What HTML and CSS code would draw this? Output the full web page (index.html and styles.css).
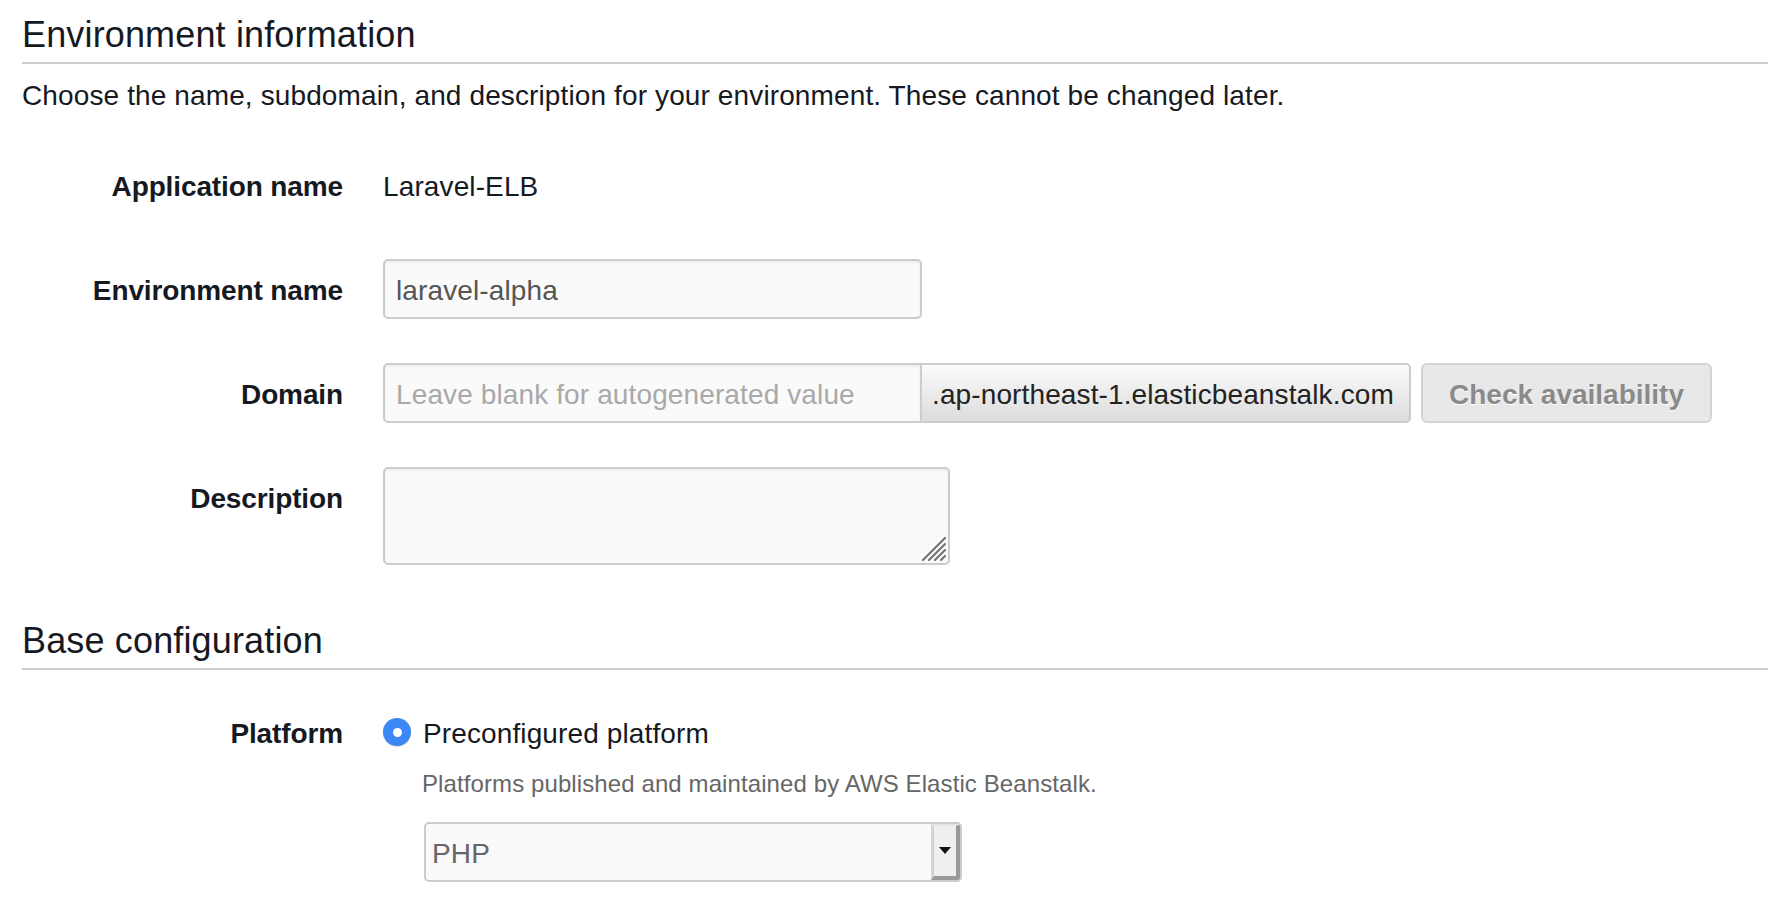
FILE: index.html
```html
<!DOCTYPE html>
<html lang="en">
<head>
<meta charset="utf-8">
<title>Environment information</title>
<link rel="stylesheet" href="styles.css">
</head>
<body>
<div class="page">
  <section class="section">
    <h2 class="section-title">Environment information</h2>
    <p class="section-desc">Choose the name, subdomain, and description for your environment. These cannot be changed later.</p>
    <div class="form">
      <div class="label">Application name</div>
      <div class="value"><span class="static">Laravel-ELB</span></div>

      <div class="label">Environment name</div>
      <div class="value"><input class="text-input env-input" type="text" value="laravel-alpha"></div>

      <div class="label">Domain</div>
      <div class="value domain">
        <div class="input-group">
          <input class="text-input domain-input" type="text" placeholder="Leave blank for autogenerated value">
          <span class="addon">.ap-northeast-1.elasticbeanstalk.com</span>
        </div>
        <button class="btn" type="button" disabled>Check availability</button>
      </div>

      <div class="label">Description</div>
      <div class="value">
        <div class="textarea-wrap">
          <textarea class="textarea"></textarea>
          <svg class="grip" width="24" height="24" viewBox="0 0 24 24" aria-hidden="true">
            <line x1="1" y1="23" x2="23" y2="1" />
            <line x1="7" y1="23" x2="23" y2="7" />
            <line x1="13" y1="23" x2="23" y2="13" />
            <line x1="19" y1="23" x2="23" y2="19" />
          </svg>
        </div>
      </div>
    </div>
  </section>

  <section class="section base">
    <h2 class="section-title">Base configuration</h2>
    <div class="form form-base">
      <div class="label">Platform</div>
      <div class="value">
        <label class="radio-line"><span class="radio"></span><span class="radio-text">Preconfigured platform</span></label>
        <p class="help">Platforms published and maintained by AWS Elastic Beanstalk.</p>
        <div class="select">
          <span class="select-text">PHP</span>
          <span class="select-btn">
            <svg width="12" height="8" viewBox="0 0 12 8" aria-hidden="true"><path d="M0 0H12L6 7Z" fill="#111"/></svg>
          </span>
        </div>
      </div>
    </div>
  </section>
</div>
</body>
</html>
```

FILE: styles.css
```css
* { box-sizing: border-box; }

html, body {
  margin: 0;
  background: #ffffff;
}

body {
  font-family: "Liberation Sans", Arial, Helvetica, sans-serif;
  font-size: 28px;
  color: #16191f;
  letter-spacing: 0.12px;
}

.page {
  padding: 13px 0 0 22px;
}

.section-title {
  margin: 0;
  font-size: 36px;
  font-weight: 400;
  line-height: 40px;
  padding-top: 2px;
  padding-bottom: 7px;
  border-bottom: 2px solid #cdcdcd;
  color: #16191f;
  letter-spacing: 0.15px;
}

.section-desc {
  margin: 16px 0 0;
  line-height: 32px;
}

.form {
  display: grid;
  grid-template-columns: 321px 1fr;
  column-gap: 40px;
  row-gap: 44px;
  margin-top: 43px;
}

.label {
  height: 60px;
  font-weight: 700;
  text-align: right;
  line-height: 64px;
  white-space: nowrap;
  letter-spacing: -0.12px;
}

.static {
  display: block;
  height: 60px;
  line-height: 64px;
}

.text-input {
  display: block;
  height: 60px;
  border: 2px solid #cccccc;
  border-radius: 5px;
  background: #fafafa;
  box-shadow: inset 0 2px 3px rgba(0, 0, 0, 0.05);
  font-family: inherit;
  font-size: 28px;
  letter-spacing: 0.12px;
  color: #555555;
  padding: 4px 11px 0;
  outline: none;
}

.text-input::placeholder {
  color: #a9a9a9;
}

.env-input {
  width: 539px;
}

.domain {
  display: flex;
  gap: 10px;
}

.input-group {
  display: flex;
}

.domain-input {
  width: 539px;
  border-radius: 5px 0 0 5px;
}

.addon {
  display: block;
  width: 489px;
  height: 60px;
  border: 2px solid #cccccc;
  border-left: 0;
  border-radius: 0 5px 5px 0;
  background: linear-gradient(#fbfbfb, #dcdcdc);
  color: #222222;
  line-height: 60px;
  padding-left: 10px;
  white-space: nowrap;
  overflow: hidden;
}

.btn {
  width: 291px;
  height: 60px;
  border: 2px solid #d3d3d3;
  border-radius: 6px;
  background: #e8e8e8;
  font-family: inherit;
  font-size: 28px;
  font-weight: 700;
  color: #8a8a8a;
  text-shadow: 0 1px 0 #ffffff;
  padding: 4px 0 0;
}

.textarea-wrap {
  position: relative;
  width: 567px;
  height: 98px;
}

.textarea {
  display: block;
  width: 100%;
  height: 100%;
  border: 2px solid #cccccc;
  border-radius: 5px;
  background: #fafafa;
  box-shadow: inset 0 2px 3px rgba(0, 0, 0, 0.05);
  resize: none;
  outline: none;
}

.grip {
  position: absolute;
  right: 4px;
  bottom: 4px;
  stroke: #6e6e6e;
  stroke-width: 2;
  stroke-linecap: round;
}

.base {
  margin-top: 54px;
}

.form-base {
  margin-top: 32px;
}

.radio-line {
  display: flex;
  align-items: flex-start;
  height: 60px;
  gap: 12px;
}

.radio {
  position: relative;
  width: 28px;
  height: 28px;
  margin-top: 16px;
  border-radius: 50%;
  background: #3b87f6;
  box-shadow: 0 1px 1px rgba(0, 0, 0, 0.15);
  flex: none;
}

.radio::after {
  content: "";
  position: absolute;
  left: 50%;
  top: 50%;
  width: 9px;
  height: 9px;
  margin: -4.5px 0 0 -4.5px;
  border-radius: 50%;
  background: #ffffff;
}

.radio-text {
  line-height: 64px;
}

.help {
  margin: 7px 0 0 39px;
  font-size: 24px;
  line-height: 30px;
  color: #666666;
  letter-spacing: 0.1px;
}

.select {
  display: flex;
  align-items: stretch;
  margin: 23px 0 0 41px;
  width: 538px;
  height: 60px;
  border: 2px solid #cccccc;
  border-radius: 5px;
  background: #fafafa;
}

.select-text {
  flex: 1;
  line-height: 60px;
  height: 56px;
  overflow: hidden;
  padding-left: 6px;
  color: #666666;
}

.select-btn {
  display: flex;
  align-items: center;
  justify-content: center;
  width: 29px;
  background: #efefef;
  border-left: 3px solid #d4d4d4;
  border-right: 4px solid #9a9a9a;
  border-bottom: 4px solid #9a9a9a;
  border-top: 2px solid #e4e4e4;
  border-radius: 0 3px 3px 0;
}
```
